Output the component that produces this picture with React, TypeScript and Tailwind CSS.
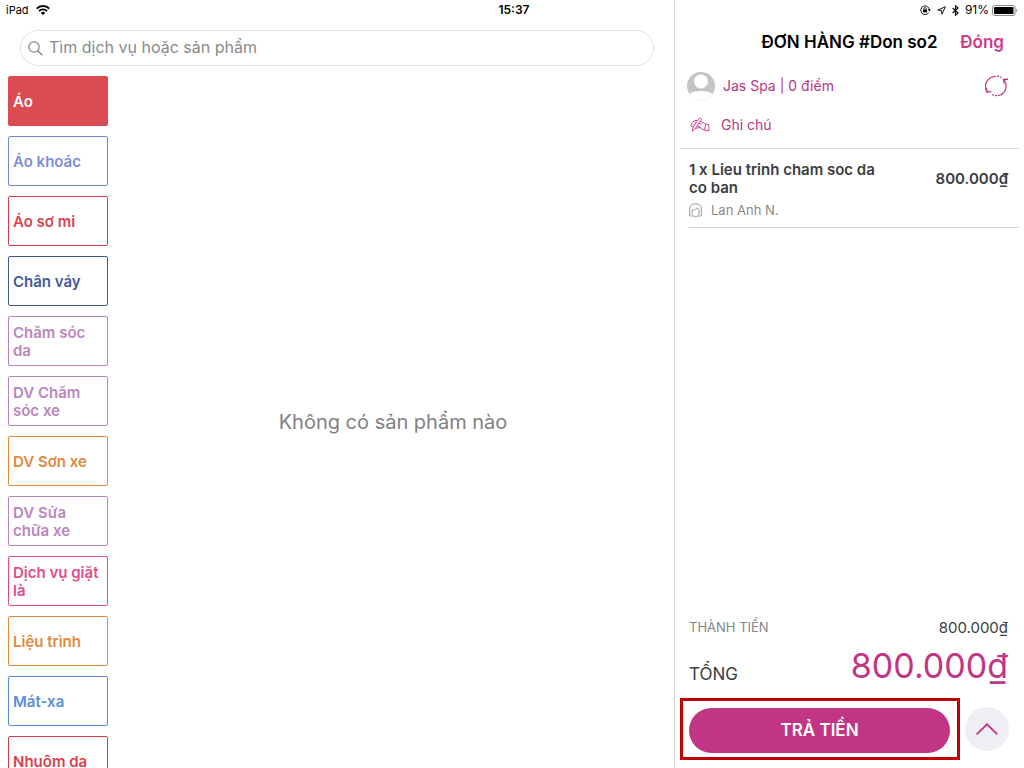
import React from 'react';

type Category = {
  name: string;
  style: string;
};

const categories: Category[] = [
  { name: 'Áo', style: 'border-[#dc4b51] bg-[#dc4b51] text-white' },
  { name: 'Áo khoác', style: 'border-[#7389d3] text-[#7b8ed6]' },
  { name: 'Áo sơ mi', style: 'border-[#d23c4f] text-[#d8424f]' },
  { name: 'Chân váy', style: 'border-[#40568f] text-[#465a9a]' },
  { name: 'Chăm sóc da', style: 'border-[#b983bb] text-[#ba86bc]' },
  { name: 'DV Chăm sóc xe', style: 'border-[#b983bb] text-[#ba86bc]' },
  { name: 'DV Sơn xe', style: 'border-[#e28a3e] text-[#e08940]' },
  { name: 'DV Sửa chữa xe', style: 'border-[#b983bb] text-[#ba86bc]' },
  { name: 'Dịch vụ giặt là', style: 'border-[#dc4a88] text-[#e04d8b]' },
  { name: 'Liệu trình', style: 'border-[#e28a3e] text-[#e08940]' },
  { name: 'Mát-xa', style: 'border-[#548bdc] text-[#5a8edb]' },
  { name: 'Nhuộm da', style: 'border-[#d23c4f] text-[#d8424f]' },
];

function WifiIcon() {
  return (
    <svg viewBox="0 0 14 10" className="w-[14px] h-[10px]" fill="none" stroke="black" strokeWidth="1.9">
      <path d="M.7 3.6a9 9 0 0 1 12.6 0" />
      <path d="M3 6a5.7 5.7 0 0 1 8 0" />
      <path d="M7 10 4.9 7.9a3 3 0 0 1 4.2 0Z" fill="black" stroke="none" />
    </svg>
  );
}

function LockRotationIcon() {
  return (
    <svg viewBox="0 0 11 10" className="w-[11px] h-[10px]" fill="none" stroke="black" strokeWidth=".9">
      <path d="M8.7 7.6A4.3 4.3 0 1 1 9.4 5" />
      <path d="M7.8 4.6h3L9.3 6.6Z" fill="black" stroke="none" />
      <rect x="3.1" y="4.5" width="4" height="2.9" fill="black" stroke="none" />
      <path d="M3.9 4.6v-.8a1.2 1.2 0 0 1 2.4 0v.8" strokeWidth=".8" />
    </svg>
  );
}

function LocationIcon() {
  return (
    <svg viewBox="0 0 9 9" className="w-[9px] h-[9px]" fill="none" stroke="black" strokeWidth=".9" strokeLinejoin="round">
      <path d="M8.4.7.8 4.1l3.7.5.4 3.7Z" />
    </svg>
  );
}

function BluetoothIcon() {
  return (
    <svg viewBox="0 0 7 11" className="w-[7px] h-[11px]" fill="none" stroke="black" strokeWidth="1.1">
      <path d="m.6 3 5.4 5-2.5 2.3V.7L6 3 .6 8" />
    </svg>
  );
}

function BatteryIcon() {
  return (
    <svg viewBox="0 0 26 11" className="w-[26px] h-[11px]">
      <rect x=".5" y=".5" width="22.5" height="10" rx="2" fill="white" stroke="#8a8a8a" />
      <rect x="2" y="2" width="19.5" height="7" rx=".8" />
      <path d="M24 3.8c1.3.4 1.3 3 0 3.4Z" fill="#8a8a8a" />
    </svg>
  );
}

function SearchIcon() {
  return (
    <svg viewBox="0 0 15 15" className="w-[15px] h-[15px] shrink-0" fill="none" stroke="#85858a" strokeWidth="1.2">
      <circle cx="6" cy="6" r="5.2" />
      <path d="m9.8 9.8 4.5 4.5" strokeWidth="1.5" />
    </svg>
  );
}

function Avatar() {
  return (
    <svg viewBox="0 0 28 28" className="w-7 h-7">
      <defs>
        <clipPath id="avatar">
          <circle cx="14" cy="14" r="14" />
        </clipPath>
      </defs>
      <g clipPath="url(#avatar)">
        <rect width="28" height="28" fill="#c4c4c4" />
        <circle cx="14" cy="9.5" r="6.9" fill="white" />
        <path d="M0 28v-5.8h2.5c3-2.6 7-3.2 11.5-3.2s8.5.6 11.500 3.200H28V28Z" fill="white" />
      </g>
    </svg>
  );
}

function RefreshIcon() {
  return (
    <svg viewBox="0 0 24 22" className="w-6 h-[22px]" fill="none" stroke="#c23585" strokeWidth="1.2">
      <path d="M2.2 16.800A9.800 9.800 0 0 1 9 1.600" />
      <path d="M9 1.600a9.800 9.800 0 0 1 8.300 1.300" strokeDasharray="2 1" />
      <path d="M18.600 4.600a9.800 9.800 0 0 1-3.600 15.600" />
      <path d="M15 20.200a9.800 9.800 0 0 1-8.500-1.200" strokeDasharray="2 1" />
      <path d="M19.300 8.300 18.500 4.500l4.500-.2M1.200 13l.8 4.200 4.200-.8" strokeWidth="1.4" />
    </svg>
  );
}

function NoteIcon() {
  return (
    <svg viewBox="0 0 20 16" className="w-5 h-4" fill="none" stroke="#c23585" strokeWidth=".9" strokeLinejoin="round">
      <path d="M2.200 14.500 3.400 9.800 9.500 1l2 1.300L5.400 11.300Z" />
      <path d="M3.400 9.800 1 8.800c0-2.600 2.300-4.900 5-5.500l1.700.2M3.200 7.600l1.300.6M4.600 5.600l1.400.5" />
      <path d="m10.200 4.300 4.100 1.900 1.500 1.500M8.700 6.400l3 .8M7.200 8.600l3.200 1.900M5.400 11.300l5-.8 1.600 1.700 3 .5" />
      <path d="m15.700 7.100 3 .4.500 5.700-4.200.6-.3-1.500Z" />
    </svg>
  );
}

function StaffIcon() {
  return (
    <svg viewBox="0 0 13 15" className="w-[13px] h-[15px]" fill="none" stroke="#8e8e8e" strokeWidth=".9">
      <path d="m3.500 13.200-2.800-.4V5.500C.7 2.500 3 .8 6.500.8s5.800 1.700 5.800 4.700v7.300l-2.800.4" />
      <path d="M3 7.200v2.600c0 2.200 1.500 4 3.500 4s3.500-1.800 3.500-4V6.500C9.300 6.200 8.700 5.500 8.500 4.800 7.300 6.400 5.300 7.200 3 7.200Z" />
    </svg>
  );
}

function StatusBar() {
  return (
    <div className="grid grid-cols-[1fr_auto_1fr] h-5 shrink-0 text-xs text-black">
      <div className="flex items-center gap-[7px] pl-[6px] text-[11px]">
        <span>iPad</span>
        <WifiIcon />
      </div>
      <div className="flex items-center pl-1 font-semibold">15:37</div>
      <div className="flex justify-end">
        <div className="flex items-center justify-end gap-[6px] w-[350px] pr-[6px] border-l border-[#d4d4d6]">
          <LockRotationIcon />
          <LocationIcon />
          <BluetoothIcon />
          <div className="flex items-center gap-[3px]">
            <span>91%</span>
            <BatteryIcon />
          </div>
        </div>
      </div>
    </div>
  );
}

function OrderPanel() {
  return (
    <aside className="flex flex-col w-[350px] shrink-0 border-l border-[#d4d4d6]">
      <header className="grid grid-cols-[1fr_auto_1fr] items-center h-11 pt-[2px] text-[17px] font-semibold">
        <h1 className="col-start-2 text-black">ĐƠN HÀNG #Don so2</h1>
        <button className="justify-self-end pr-5 text-[#cf3a89]">Đóng</button>
      </header>

      <div className="mx-[5px] pb-[9px] border-b border-[#dcdcde] text-[#b8357f]">
        <div className="flex items-center justify-between pl-[7px] pr-[10px] pt-[6px]">
          <button className="flex items-center gap-2 h-8 text-sm">
            <Avatar />
            <span>Jas Spa | 0 điểm</span>
          </button>
          <button aria-label="Làm mới">
            <RefreshIcon />
          </button>
        </div>
        <button className="flex items-center gap-[11px] h-7 mt-[9px] pl-[10px] text-sm">
          <NoteIcon />
          <span>Ghi chú</span>
        </button>
      </div>

      {/* Order line */}
      <div className="ml-[14px] mr-[5px] pt-3 pb-[8px] pr-[11px] border-b border-[#d4d4d6]">
        <div className="flex items-start justify-between text-[15px] leading-[18px] font-semibold text-[#3c3c3e]">
          <p className="w-[200px]">1 x Lieu trinh cham soc da co ban</p>
          <p className="pt-[9px]">800.000₫</p>
        </div>
        <div className="flex items-center gap-[9px] mt-1 text-[13px] leading-[18px] text-[#8a8a8c]">
          <StaffIcon />
          <span>Lan Anh N.</span>
        </div>
      </div>

      {/* Totals */}
      <div className="mt-auto pl-[14px] pr-4 text-[#3c3c3e]">
        <div className="flex items-center justify-between h-5">
          <span className="text-[13px] text-[#858587]">THÀNH TIỀN</span>
          <span className="text-[15px]">800.000₫</span>
        </div>
        <div className="flex items-end justify-between mt-2">
          <span className="text-[17px] leading-[24px]">TỔNG</span>
          <span className="text-[34px] leading-[40px] text-[#c23585]">800.000₫</span>
        </div>
      </div>

      <div className="flex items-center gap-[5px] mt-[12px] mb-2 pl-[5px] pr-[15px]">
        <div className="flex-1 pl-[6px] pr-[7px] pt-[7px] pb-1 border-3 border-[#c00008]">
          <button className="w-full h-[45px] rounded-full bg-[#c23585] text-[17px] font-semibold text-white">
            TRẢ TIỀN
          </button>
        </div>
        <button aria-label="Mở rộng" className="flex items-center justify-center w-11 h-11 rounded-full bg-[#efeef5]">
          <svg viewBox="0 0 22 12" className="w-[22px] h-3" fill="none" stroke="#c23585" strokeWidth="1.8">
            <path d="M.7 11.300 11 1.300l10.300 10" />
          </svg>
        </button>
      </div>
    </aside>
  );
}

export default function App() {
  return (
    <div className="flex flex-col h-screen overflow-hidden bg-white font-['Inter','Liberation_Sans',sans-serif]">
      <StatusBar />
      <div className="flex flex-1 min-h-0">
        <main className="flex flex-col flex-1 min-w-0">
          <div className="px-5 py-[10px]">
            <label className="flex items-center gap-[6px] h-9 px-[7px] rounded-full border border-[#e2e2e5]">
              <SearchIcon />
              <input
                type="text"
                aria-label="Tìm dịch vụ hoặc sản phẩm"
                placeholder="Tìm dịch vụ hoặc sản phẩm"
                className="flex-1 pb-[2px] text-base outline-none placeholder:text-[#8a8a8c]"
              />
            </label>
          </div>

          <div className="flex flex-1 min-h-0">
            <nav className="flex flex-col gap-[10px] w-28 pl-2 pr-1 overflow-hidden">
              {categories.map((category) => (
                <button
                  key={category.name}
                  className={`h-[50px] shrink-0 px-1 pt-[2px] rounded-xs border text-left text-[15px] leading-[18px] font-semibold ${category.style}`}
                >
                  {category.name}
                </button>
              ))}
            </nav>
            <div className="flex flex-1 items-center justify-center text-xl text-[#818183]">
              Không có sản phẩm nào
            </div>
          </div>
        </main>
        <OrderPanel />
      </div>
    </div>
  );
}
